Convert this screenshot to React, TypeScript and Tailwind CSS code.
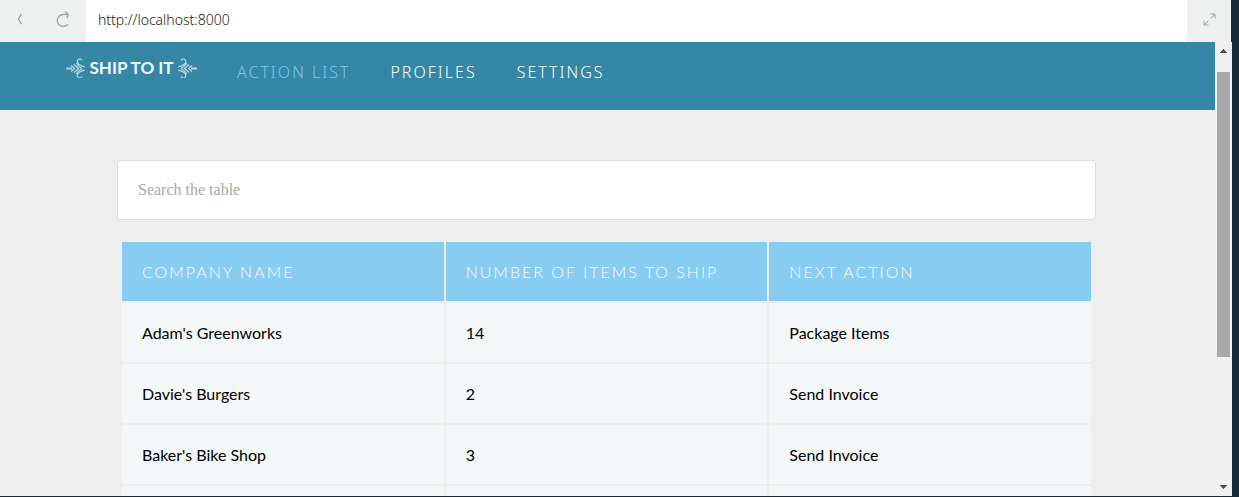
import React from "react";

const navItems = [
  { label: "ACTION LIST", href: "#actions", active: true },
  { label: "PROFILES", href: "#profiles", active: false },
  { label: "SETTINGS", href: "#settings", active: false },
];

const columns = ["COMPANY NAME", "NUMBER OF ITEMS TO SHIP", "NEXT ACTION"];

const rows = [
  ["Adam's Greenworks", "14", "Package Items"],
  ["Davie's Burgers", "2", "Send Invoice"],
  ["Baker's Bike Shop", "3", "Send Invoice"],
  ["", "", ""],
];

function Flourish({ className = "" }: { className?: string }) {
  return (
    <svg viewBox="0 0 19 20" className={"h-5 w-[19px] shrink-0 " + className} fill="none" stroke="#b9d7e2" aria-hidden="true">
      <path d="M0 10.500h6" strokeWidth="2" />
      <path d="M5 7.500l3.500 3L5 13.500" strokeWidth="1.300" />
      <path d="M8 6.500l4.500 4-4.500 4" strokeWidth="1.300" />
      <path d="M15.800 2.600C15.500.2 11.300.4 11.300 3.600c0 2.900 3 4.200 7.500 5.300M10.300 5c1 2.600 3.200 4 5.700 5.500" strokeWidth="1.200" />
      <path d="M15.800 18.400c-.3 2.400-4.500 2.200-4.500-1 0-2.900 3-4.200 7.500-5.300M10.300 16c1-2.600 3.200-4 5.700-5.500" strokeWidth="1.200" />
    </svg>
  );
}

function BrowserBar() {
  return (
    <div className="mr-2 flex h-[42px] shrink-0 bg-[#eff1f1]">
      <div className="flex w-[86px] items-center pb-1">
        <button aria-label="Back" className="flex h-full w-10 items-center justify-center text-[#999]">
          <svg viewBox="0 0 6 12" className="h-3 w-[6px]" fill="none" stroke="currentColor" strokeWidth="1.2" aria-hidden="true">
            <path d="M4.500 .8L1.500 6l3 5.200" />
          </svg>
        </button>
        <button aria-label="Reload" className="flex h-full w-[46px] items-center justify-center text-[#a5a5a8]">
          <svg viewBox="0 0 14 16" className="h-4 w-[14px]" fill="none" stroke="currentColor" strokeWidth="1.400" aria-hidden="true">
            <path d="M12 13.300A6 6 0 1 1 7 3.500h5M9 .5l3.300 3L11 7.200" />
          </svg>
        </button>
      </div>
      <input
        aria-label="Address"
        defaultValue="http://localhost:8000"
        className="min-w-0 flex-1 bg-white px-3 pb-[3px] font-['Noto_Sans',sans-serif] text-sm font-light text-[#222] outline-none"
      />
      <button aria-label="Full screen" className="flex w-11 items-center justify-center pb-1 text-[#999ba3]">
        <svg viewBox="0 0 13 13" className="h-[13px] w-[13px]" fill="none" stroke="currentColor" aria-hidden="true">
          <path d="M7.500 1h4.500v4.500M12 1L7.500 5.500M1 7.500V12h4.500M1 12l4.500-4.500" />
        </svg>
      </button>
    </div>
  );
}

function Scrollbar() {
  return (
    <div className="flex w-[17px] shrink-0 flex-col items-center bg-[#f0f0f0]" aria-hidden="true">
      <svg viewBox="0 0 7 4" className="mt-[7px] h-1 w-[7px]" fill="#505050">
        <path d="M3 0h1v1h1v1h1v1h1v1H0V3h1V2h1V1h1z" />
      </svg>
      <div className="mt-[19px] h-[285px] w-[13px] bg-[#a8a8a8]" />
      <svg viewBox="0 0 7 4" className="mt-auto mb-[7px] h-1 w-[7px]" fill="#505050">
        <path d="M0 0h7v1H6v1H5v1H4v1H3V3H2V2H1V1H0z" />
      </svg>
    </div>
  );
}

export default function App() {
  return (
    <div className="flex h-screen flex-col overflow-hidden bg-[#172b38] pb-px font-[Lato,sans-serif]">
      <BrowserBar />
      <div className="mr-[7px] flex min-h-0 flex-1">
        <div className="min-w-0 flex-1 overflow-hidden bg-[#eee]">
          <header className="flex h-[68px] items-start bg-[#3687a5] pl-[66px]">
            <a href="#home" className="mt-4 flex h-5 w-[131px] items-center justify-between text-[17px] leading-5 font-bold whitespace-nowrap text-[#f0f7fa]">
              <Flourish />
              SHIP TO IT
              <Flourish className="-scale-x-100" />
            </a>
            <nav className="mt-[18px] ml-10 flex gap-10 font-['Noto_Sans',sans-serif] text-base leading-6 font-light tracking-[2px]">
              {navItems.map((item) => (
                <a key={item.label} href={item.href} className={item.active ? "text-[#7cc8f2]" : "text-white"}>
                  {item.label}
                </a>
              ))}
            </nav>
          </header>
          <main className="pt-[50px] pr-[119px] pl-[117px]">
            <input
              type="text"
              aria-label="Search the table"
              placeholder="Search the table"
              className="block h-[60px] w-full rounded-[3px] border border-[#ddd] bg-white px-5 font-['Liberation_Serif',serif] text-base outline-none placeholder:text-[#a9a9a9]"
            />
            <div className="mt-5 px-[3px]">
              <table className="w-full table-fixed border-separate border-spacing-[2px] text-left text-base">
                <thead>
                  <tr>
                    {columns.map((column) => (
                      <th key={column} className="h-[59px] bg-[#89ccf2] px-5 py-0 font-light tracking-[2px] text-white">
                        {column}
                      </th>
                    ))}
                  </tr>
                </thead>
                <tbody>
                  {rows.map((row, index) => (
                    <tr key={index}>
                      {row.map((cell, cellIndex) => (
                        <td key={cellIndex} className="h-[59px] bg-[#f3f7f8] px-5 py-0 text-black">
                          {cell}
                        </td>
                      ))}
                    </tr>
                  ))}
                </tbody>
              </table>
            </div>
          </main>
        </div>
        <Scrollbar />
      </div>
    </div>
  );
}
